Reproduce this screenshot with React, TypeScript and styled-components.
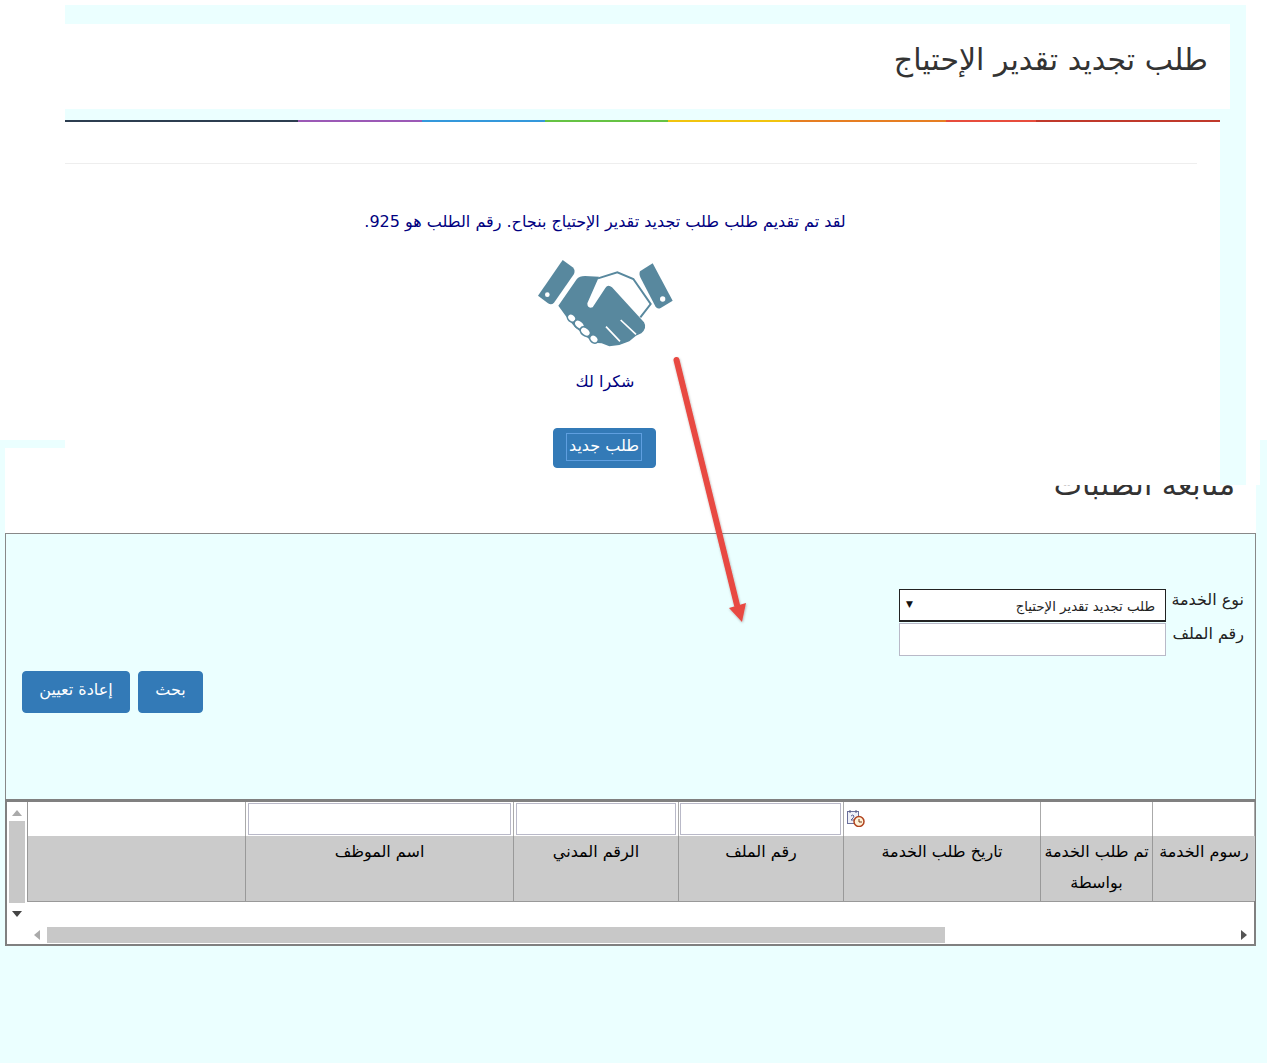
import React from "react";
import styled, { createGlobalStyle } from "styled-components";

const Global = createGlobalStyle`
  html, body { margin: 0; padding: 0; background: #fff; }
  body { font-family: "DejaVu Sans", "Noto Sans", sans-serif; overflow: hidden; }
  * { box-sizing: border-box; }
`;

const CYAN = "#ebffff";
const BLUE = "#337ab7";

const Page = styled.div`
  position: relative;
  height: 1063px;
  overflow: hidden;
  display: flex;
  flex-direction: column;
`;

const ConfirmSheet = styled.section`
  position: relative;
  z-index: 1;
  flex: none;
  margin: 5px 0 0 65px;
  width: 1181px;
  height: 480px;
  padding-top: 19px;
  background: ${CYAN};
  direction: rtl;
`;

const SheetHeader = styled.header`
  margin-right: 16px;
  height: 85px;
  background: #fff;
  padding: 13px 22px 0 0;
`;

const PageTitle = styled.h1`
  margin: 0;
  font-size: 30px;
  line-height: 46px;
  font-weight: 400;
  color: #333;
`;

const RainbowBar = styled.div`
  margin: 11px 26px 0 0;
  height: 2px;
  display: flex;
  direction: ltr;
`;

const RainbowPart = styled.span<{ $w: number; $c: string }>`
  width: ${(p) => p.$w}px;
  background: ${(p) => p.$c};
`;

const SheetBody = styled.div`
  margin-right: 26px;
  height: 363px;
  background: #fff;
  padding-top: 41px;
`;

const Rule = styled.hr`
  margin: 0 23px 0 0;
  border: 0;
  border-top: 1px solid #eee;
`;

const Confirmation = styled.div`
  width: 1080px;
  margin-top: 47px;
  margin-right: 75px;
  display: flex;
  flex-direction: column;
  align-items: center;
  color: #000080;
`;

const Message = styled.p`
  margin: 0;
  height: 22px;
  font-size: 16px;
  line-height: 22px;
`;

const Handshake = styled.svg`
  display: block;
  margin-top: 24px;
  width: 140px;
  height: 92px;
`;

const Thanks = styled.p`
  margin: 22px 0 0;
  height: 22px;
  font-size: 16px;
  line-height: 22px;
`;

const PrimaryButton = styled.button<{ $w: number; $h?: number }>`
  width: ${(p) => p.$w}px;
  height: ${(p) => p.$h ?? 42}px;
  border: 1px solid ${BLUE};
  border-radius: 4px;
  background: ${BLUE};
  color: #fff;
  font-family: inherit;
  font-size: 16px;
  padding: 0 0 5px;
`;

const NewRequest = styled(PrimaryButton)`
  margin: 35px 2px 0 0;
  padding: 0 0 2px;
  display: flex;
  align-items: center;
  justify-content: center;
`;

const FocusRing = styled.span`
  display: block;
  padding: 0 2px 2px;
  line-height: 24px;
  border: 1px solid #5f9fe0;
`;

const TrackingPanel = styled.main`
  flex: 1;
  margin-top: -45px;
  padding: 8px 11px 0 5px;
  background: ${CYAN};
  direction: rtl;
`;

const TrackingHead = styled.div`
  position: relative;
  height: 85px;
  background: #fff;
  padding: 14px 21px 0 0;
  &::after {
    content: "";
    position: absolute;
    top: -8px;
    right: -4px;
    width: 14px;
    height: 45px;
    background: #fff;
  }
`;

const TrackingTitle = styled.h2`
  margin: 0;
  font-size: 30px;
  line-height: 46px;
  font-weight: 400;
  color: #333;
`;

const SearchBox = styled.div`
  height: 267px;
  border: 1px solid #888;
  padding: 55px 11px 0 16px;
`;

const FieldRow = styled.div`
  display: flex;
  height: 34px;
  gap: 6px;
`;

const FieldLabel = styled.label`
  width: 72px;
  font-size: 16px;
  line-height: 22px;
  white-space: nowrap;
  color: #222;
`;

const SelectBox = styled.div`
  width: 267px;
  height: 33px;
  background: #fff;
  border: 1px solid #222;
  border-bottom-width: 2px;
  display: flex;
  justify-content: space-between;
  padding: 0 10px 0 6px;
  font-size: 13.3px;
  line-height: 34px;
  color: #222;
`;

const SelectCaret = styled.span`
  font-size: 9px;
  line-height: 28px;
  color: #111;
`;

const TextInput = styled.input<{ $w: number; $h?: number }>`
  width: ${(p) => p.$w}px;
  height: ${(p) => p.$h ?? 33}px;
  background: #fff;
  border: 1px solid #b9b9c8;
  padding: 0;
`;

const ButtonRow = styled.div`
  display: flex;
  justify-content: flex-end;
  gap: 8px;
  margin-top: 14px;
`;

const GridFrame = styled.div`
  height: 147px;
  background: #fff;
  border: 2px solid #808080;
  border-top-width: 3px;
  margin-top: -1px;
  display: grid;
  direction: ltr;
  grid-template-columns: 20px 1fr;
  grid-template-rows: 101px 1fr;
`;

const VScroll = styled.div`
  display: flex;
  flex-direction: column;
  align-items: center;
  padding-top: 8px;
  grid-row: 1 / 3;
`;

const VThumb = styled.div`
  margin: 5px 0 8px;
  width: 16px;
  height: 82px;
  background: #c8c8c8;
`;

const ScrollArrow = styled.svg<{ $tone: string }>`
  display: block;
  width: 10px;
  height: 6px;
  fill: ${(p) => p.$tone};
`;

const DataTable = styled.div`
  display: grid;
  direction: ltr;
  grid-template-columns: 218px 268px 165px 165px 197px 112px 102px;
  grid-template-rows: 35px 64px;
  align-self: start;
  border-bottom: 1px solid #999;
  border-left: 1px solid #999;
  width: 1227px;
`;

const FilterCell = styled.div<{ $pad?: number }>`
  border-right: 1px solid #aaa;
  border-bottom: 1px solid #999;
  padding: 1px ${(p) => p.$pad ?? 2}px;
  display: flex;
  align-items: flex-start;
  &:last-child { border-right: 0; }
`;

const HeadCell = styled.div`
  background: #cbcbcb;
  border-right: 1px solid #999;
  direction: rtl;
  font-size: 16px;
  line-height: 31px;
  margin-top: -1px;
  text-align: center;
  color: #000;
  white-space: pre-line;
  overflow: hidden;
  &:last-child { border-right: 0; }
`;

const DateIcon = styled.svg`
  display: block;
  margin: 6px 0 0 0;
  width: 19px;
  height: 18px;
`;

const HScroll = styled.div`
  display: flex;
  align-items: center;
  padding: 0 7px 0 7px;
  height: 44px;
`;

const HThumb = styled.div`
  margin: 20px 0 0 7px;
  width: 898px;
  height: 16px;
  background: #c8c8c8;
`;

const HArrow = styled.svg<{ $tone: string }>`
  display: block;
  flex: none;
  margin-top: 20px;
  width: 6px;
  height: 10px;
  fill: ${(p) => p.$tone};
`;

const HSpacer = styled.div`
  flex: 1;
`;

const Annotation = styled.svg`
  position: absolute;
  z-index: 2;
  left: 660px;
  top: 350px;
  width: 100px;
  height: 290px;
  overflow: visible;
`;

const rainbow: [number, string][] = [
  [233, "#2c3e50"],
  [124, "#9b59b6"],
  [123, "#3498db"],
  [123, "#66c344"],
  [122, "#f1c40f"],
  [156, "#e67e22"],
  [90, "#e74c3c"],
  [184, "#c0392b"],
];

const heads = [
  "",
  "اسم الموظف",
  "الرقم المدني",
  "رقم الملف",
  "تاريخ طلب الخدمة",
  "تم طلب الخدمة\nبواسطة",
  "رسوم الخدمة",
];

export default function App() {
  return (
    <Page>
      <Global />
      <ConfirmSheet>
        <SheetHeader>
          <PageTitle>طلب تجديد تقدير الإحتياج</PageTitle>
        </SheetHeader>
        <RainbowBar>
          {rainbow.map(([w, c]) => (
            <RainbowPart key={c} $w={w} $c={c} />
          ))}
        </RainbowBar>
        <SheetBody>
          <Rule />
          <Confirmation>
            <Message>لقد تم تقديم طلب طلب تجديد تقدير الإحتياج بنجاح. رقم الطلب هو 925.</Message>
            <Handshake viewBox="15 9 420 276" aria-hidden="true">
              <g fill="#58889e">
                <path d="M98 18 L128 40 Q137 48 132 60 L72 146 Q64 155 54 148 L24 125 Z" />
                <path d="M330 52 L368 28 L428 140 L392 162 Q382 167 376 157 L332 72 Q326 60 330 52 Z" />
                <path d="M85 155 L140 76 Q148 66 165 66 L207 68 L172 148 Q172 165 188 160 L226 102 Q234 90 246 100 L342 205 Q352 222 334 238 L318 245 L298 262 L268 273 L238 277 L215 268 L190 266 L160 240 L135 220 L110 190 Z" />
              </g>
              <path d="M204 73 L262 55 L310 75 L362 150 L331 190" fill="none" stroke="#58889e" strokeWidth="6" />
              <g fill="#fff">
                <circle cx="52" cy="122" r="7" />
                <circle cx="398" cy="135" r="8" />
              </g>
              <g fill="#fff" stroke="#58889e" strokeWidth="5">
                <ellipse cx="125" cy="192" rx="14" ry="11" transform="rotate(40 125 192)" />
                <ellipse cx="148" cy="212" rx="17" ry="12" transform="rotate(40 148 212)" />
                <ellipse cx="166" cy="233" rx="17" ry="12" transform="rotate(40 166 233)" />
                <ellipse cx="192" cy="255" rx="14" ry="11" transform="rotate(40 192 255)" />
              </g>
              <path d="M228 218 L270 262 M272 198 L318 241" stroke="#fff" strokeWidth="5" fill="none" />
            </Handshake>
            <Thanks>شكرا لك</Thanks>
            <NewRequest $w={103} $h={40}>
              <FocusRing>طلب جديد</FocusRing>
            </NewRequest>
          </Confirmation>
        </SheetBody>
      </ConfirmSheet>

      <TrackingPanel>
        <TrackingHead>
          <TrackingTitle>متابعة الطلبات</TrackingTitle>
        </TrackingHead>
        <SearchBox>
          <FieldRow>
            <FieldLabel>نوع الخدمة</FieldLabel>
            <SelectBox>
              <span>طلب تجديد تقدير الإحتياج</span>
              <SelectCaret>▼</SelectCaret>
            </SelectBox>
          </FieldRow>
          <FieldRow>
            <FieldLabel>رقم الملف</FieldLabel>
            <TextInput $w={267} />
          </FieldRow>
          <ButtonRow>
            <PrimaryButton $w={65}>بحث</PrimaryButton>
            <PrimaryButton $w={108}>إعادة تعيين</PrimaryButton>
          </ButtonRow>
        </SearchBox>
        <GridFrame>
          <VScroll>
            <ScrollArrow $tone="#aaa" viewBox="0 0 10 6"><path d="M5 0 L10 6 L0 6 Z" /></ScrollArrow>
            <VThumb />
            <ScrollArrow $tone="#444" viewBox="0 0 10 6"><path d="M0 0 L10 0 L5 6 Z" /></ScrollArrow>
          </VScroll>
          <DataTable>
            <FilterCell />
            <FilterCell><TextInput $w={264} $h={32} /></FilterCell>
            <FilterCell><TextInput $w={160} $h={32} /></FilterCell>
            <FilterCell $pad={1}><TextInput $w={161} $h={32} /></FilterCell>
            <FilterCell>
              <DateIcon viewBox="0 0 19 18" aria-hidden="true">
                <rect x="1.5" y="2.5" width="11" height="12" fill="#eef0f8" stroke="#6a6f9a" />
                <path d="M4 1 v3 M10 1 v3" stroke="#555a80" />
                <path d="M5 7 q2 -2 3 0 q0 1.500 -3 4 h3" stroke="#5a5f90" fill="none" />
                <circle cx="13" cy="12.500" r="5" fill="#fff3d8" stroke="#b0431f" strokeWidth="1.500" />
                <path d="M13 10 v3 h3" stroke="#7a3a1a" fill="none" />
              </DateIcon>
            </FilterCell>
            <FilterCell />
            <FilterCell />
            {heads.map((h, i) => (
              <HeadCell key={i}>{h}</HeadCell>
            ))}
          </DataTable>
          <HScroll>
            <HArrow $tone="#aaa" viewBox="0 0 6 10"><path d="M6 0 L6 10 L0 5 Z" /></HArrow>
            <HThumb />
            <HSpacer />
            <HArrow $tone="#555" viewBox="0 0 6 10"><path d="M0 0 L6 5 L0 10 Z" /></HArrow>
          </HScroll>
        </GridFrame>
      </TrackingPanel>

      <Annotation viewBox="0 0 100 290" aria-hidden="true">
        <defs>
          <filter id="arrow-shadow" x="-30%" y="-5%" width="160%" height="110%">
            <feDropShadow dx="0.5" dy="1" stdDeviation="1" floodColor="#000" floodOpacity="0.3" />
          </filter>
        </defs>
        <g filter="url(#arrow-shadow)">
          <path d="M16.5 10 L77 255" stroke="#e84a43" strokeWidth="6" strokeLinecap="round" fill="none" />
          <path d="M69 258 L86 253 L82 272 Z" fill="#e84a43" />
        </g>
      </Annotation>
    </Page>
  );
}
